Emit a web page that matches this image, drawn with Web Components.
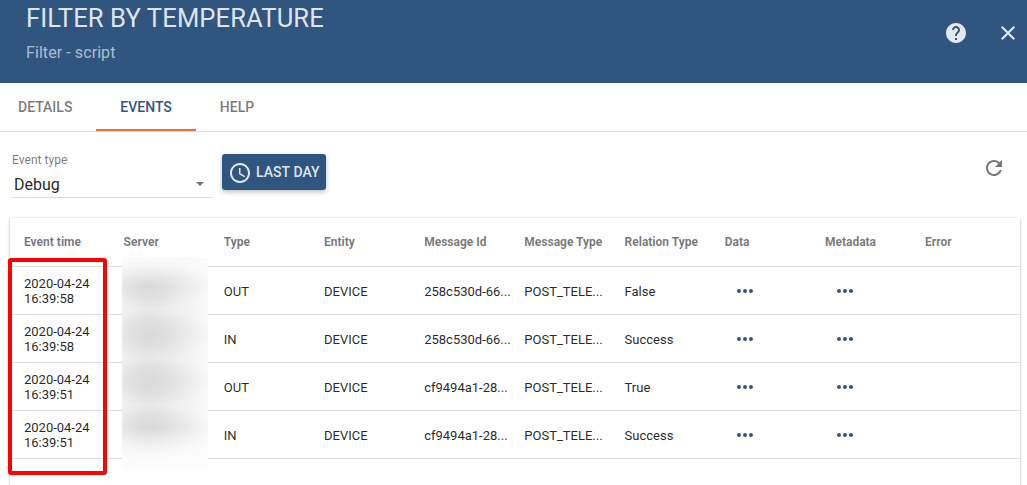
<!DOCTYPE html>
<html lang="en">
<head>
<meta charset="utf-8">
<title>Filter by temperature</title>
<style>
html,body{margin:0;height:100%;overflow:hidden;background:#fff}
body{font-family:Roboto,"Liberation Sans",sans-serif;color:rgba(0,0,0,.87)}
</style>
</head>
<body>
<details-panel></details-panel>
<script>
const define = (name, html, setup) => customElements.define(name, class extends HTMLElement {
  constructor() {
    super();
    const t = document.createElement('template');
    t.innerHTML = html;
    this.attachShadow({mode: 'open'}).append(t.content.cloneNode(true));
  }
  connectedCallback() { if (setup) setup(this, this.shadowRoot); }
});

const icons = {
  help: 'M12 2C6.48 2 2 6.48 2 12s4.48 10 10 10 10-4.48 10-10S17.52 2 12 2zm1 17h-2v-2h2v2zm2.07-7.75l-.9.92C13.45 12.9 13 13.5 13 15h-2v-.5c0-1.1.45-2.1 1.17-2.83l1.24-1.26c.37-.36.59-.86.59-1.41 0-1.1-.9-2-2-2s-2 .9-2 2H8c0-2.21 1.79-4 4-4s4 1.79 4 4c0 .88-.36 1.68-.93 2.25z',
  close: 'M19 6.41L17.59 5 12 10.59 6.41 5 5 6.41 10.59 12 5 17.59 6.41 19 12 13.41 17.59 19 19 17.59 13.41 12z',
  refresh: 'M17.65 6.35C16.2 4.9 14.21 4 12 4c-4.42 0-7.99 3.58-7.99 8s3.57 8 7.99 8c3.73 0 6.84-2.55 7.73-6h-2.08c-.82 2.33-3.04 4-5.65 4-3.31 0-6-2.69-6-6s2.69-6 6-6c1.66 0 3.14.69 4.22 1.78L13 11h7V4l-2.35 2.35z',
  clock: 'M11.99 2C6.47 2 2 6.48 2 12s4.47 10 9.99 10C17.52 22 22 17.52 22 12S17.52 2 11.99 2zM12 20c-4.42 0-8-3.58-8-8s3.58-8 8-8 8 3.58 8 8-3.58 8-8 8zm.5-13H11v6l5.25 3.15.75-1.23-4.5-2.67z',
  more: 'M6 10c-1.1 0-2 .9-2 2s.9 2 2 2 2-.9 2-2-.9-2-2-2zm12 0c-1.1 0-2 .9-2 2s.9 2 2 2 2-.9 2-2-.9-2-2-2zm-6 0c-1.1 0-2 .9-2 2s.9 2 2 2 2-.9 2-2-.9-2-2-2z'
};

define('md-icon', `<style>
:host{display:block;width:24px;height:24px;flex:none}
svg{display:block;width:100%;height:100%;fill:currentColor}
</style><svg viewBox="0 0 24 24"><path/></svg>`,
  (h, r) => r.querySelector('path').setAttribute('d', icons[h.getAttribute('name')]));

define('panel-header', `<style>
:host{display:flex;justify-content:space-between;box-sizing:border-box;height:83px;background:#305680;color:rgba(255,255,255,.87);padding:3px 7px 0 26px}
.title{font-size:25.6px;line-height:31px;letter-spacing:.1px}
.sub{font-size:16px;line-height:20px;margin-top:9px;letter-spacing:.005em;color:rgba(255,255,255,.62)}
.actions{display:flex;gap:28px;padding-top:18px}
</style>
<div><div class="title"><slot name="title"></slot></div><div class="sub"><slot name="sub"></slot></div></div>
<div class="actions"><md-icon name="help"></md-icon><md-icon name="close"></md-icon></div>`);

define('tab-item', `<style>
:host{display:block;box-sizing:border-box;height:48px;padding:0 24px;font-size:14px;font-weight:500;line-height:48px;color:rgba(0,0,0,.54)}
:host([active]){color:#305680;border-bottom:2px solid #ef6c3b}
</style><slot></slot>`);

define('tab-bar', `<style>
:host{display:flex;height:48px;border-bottom:1px solid #dfdfdf}
::slotted(tab-item:first-child){padding-left:18px}
</style><slot></slot>`);

define('type-select', `<style>
:host{display:block;width:200px;height:44px;border-bottom:1px solid #dcdcdc}
.label{font-size:12px;line-height:14px;letter-spacing:.05px;color:rgba(0,0,0,.54)}
.value{display:flex;justify-content:space-between;align-items:center;font-size:16px;line-height:20px;margin-top:8px;padding:0 8px 0 2px}
svg{display:block;width:8px;height:4px;margin-top:-2px;fill:#757575}
</style><div class="label"><slot name="label"></slot></div><div class="value"><slot></slot><svg viewBox="0 0 8 4"><path d="M0 0h8L4 4z"/></svg></div>`);

define('time-button', `<style>
:host{display:flex;align-items:center;box-sizing:border-box;width:104px;height:36px;padding-left:6px;gap:4px;border-radius:3px;background:#305680;color:rgba(255,255,255,.87);font-size:14px;font-weight:500;letter-spacing:.05px;white-space:nowrap;box-shadow:0 2px 5px rgba(0,0,0,.26)}
md-icon{margin-top:1px}
</style><md-icon name="clock"></md-icon><slot></slot>`);

define('event-row', `<style>
:host{display:grid;grid-template-columns:99.6px repeat(9,100.2px);align-items:center;box-sizing:border-box;height:48px;padding-left:14px;border-bottom:1px solid #dedede;font-size:13px;line-height:15px;white-space:nowrap}
:host([head]){height:49px;font-size:12px;font-weight:700;color:rgba(0,0,0,.54)}
.cell{padding-top:2px}
.cell.time{width:70px;padding-top:0;white-space:normal}
:host([head]) .cell{padding-top:0}
md-icon{margin-left:8px;color:#305680}
</style>`, (h, r) => {
  const head = h.hasAttribute('head');
  h.getAttribute('cells').split('|').forEach((v, i) => {
    const d = document.createElement('div');
    d.className = i === 0 && !head ? 'cell time' : 'cell';
    if (v === '*') {
      d.className = '';
      const m = document.createElement('md-icon');
      m.setAttribute('name', 'more');
      d.append(m);
    } else d.textContent = v;
    r.append(d);
  });
});

define('server-mask', `<style>
:host{display:block;width:86px;height:213px;overflow:hidden;
background:
linear-gradient(#fbfbfb,rgba(251,251,251,.75) 4%,rgba(251,251,251,.3) 9%,rgba(251,251,251,0) 14%,rgba(253,253,253,0) 80%,rgba(253,253,253,.5) 88%,rgba(253,253,253,.85) 94%,#fdfdfd),
radial-gradient(ellipse 64px 25px at 28px 27px,rgba(0,0,0,.065),rgba(0,0,0,.045) 45%,transparent),
radial-gradient(ellipse 64px 25px at 28px 77px,rgba(0,0,0,.065),rgba(0,0,0,.045) 45%,transparent),
radial-gradient(ellipse 64px 25px at 28px 124px,rgba(0,0,0,.065),rgba(0,0,0,.045) 45%,transparent),
radial-gradient(ellipse 64px 25px at 28px 172px,rgba(0,0,0,.065),rgba(0,0,0,.045) 45%,transparent),
linear-gradient(90deg,#f2f2f2,#ebebeb 16%,#e8e8e8 32%,#ebebeb 50%,#f2f2f2 74%,#f9f9f9)}
</style>`);

define('event-table', `<style>
:host{display:block;position:relative;box-sizing:border-box;height:267px;background:#fff;box-shadow:0 1px 3px rgba(0,0,0,.24),0 0 1px rgba(0,0,0,.12)}
server-mask{position:absolute;left:112px;top:39px}
.mark{position:absolute;left:-2px;top:40px;width:99px;height:217px;box-sizing:border-box;border:4px solid #f00;border-radius:3px}
</style><slot></slot><server-mask></server-mask><div class="mark"></div>`);

define('details-panel', `<style>
:host{display:block;height:485px;overflow:hidden}
.bar{display:flex;align-items:flex-start;padding:21px 21px 0 12px;height:65px}
time-button{margin:1px 0 0 10px}
.bar>md-icon{margin:3px 0 0 auto;color:rgba(0,0,0,.54)}
event-table{margin:0 7px 0 10px}
</style>
<panel-header><span slot="title">FILTER BY TEMPERATURE</span><span slot="sub">Filter - script</span></panel-header>
<tab-bar><tab-item>DETAILS</tab-item><tab-item active>EVENTS</tab-item><tab-item>HELP</tab-item></tab-bar>
<div class="bar"><type-select><span slot="label">Event type</span>Debug</type-select><time-button>LAST DAY</time-button><md-icon name="refresh"></md-icon></div>
<event-table>
<event-row head cells="Event time|Server|Type|Entity|Message Id|Message Type|Relation Type|Data|Metadata|Error"></event-row>
<event-row cells="2020-04-24 16:39:58||OUT|DEVICE|258c530d-66...|POST_TELE...|False|*|*|"></event-row>
<event-row cells="2020-04-24 16:39:58||IN|DEVICE|258c530d-66...|POST_TELE...|Success|*|*|"></event-row>
<event-row cells="2020-04-24 16:39:51||OUT|DEVICE|cf9494a1-28...|POST_TELE...|True|*|*|"></event-row>
<event-row cells="2020-04-24 16:39:51||IN|DEVICE|cf9494a1-28...|POST_TELE...|Success|*|*|"></event-row>
</event-table>`);
</script>
</body>
</html>
